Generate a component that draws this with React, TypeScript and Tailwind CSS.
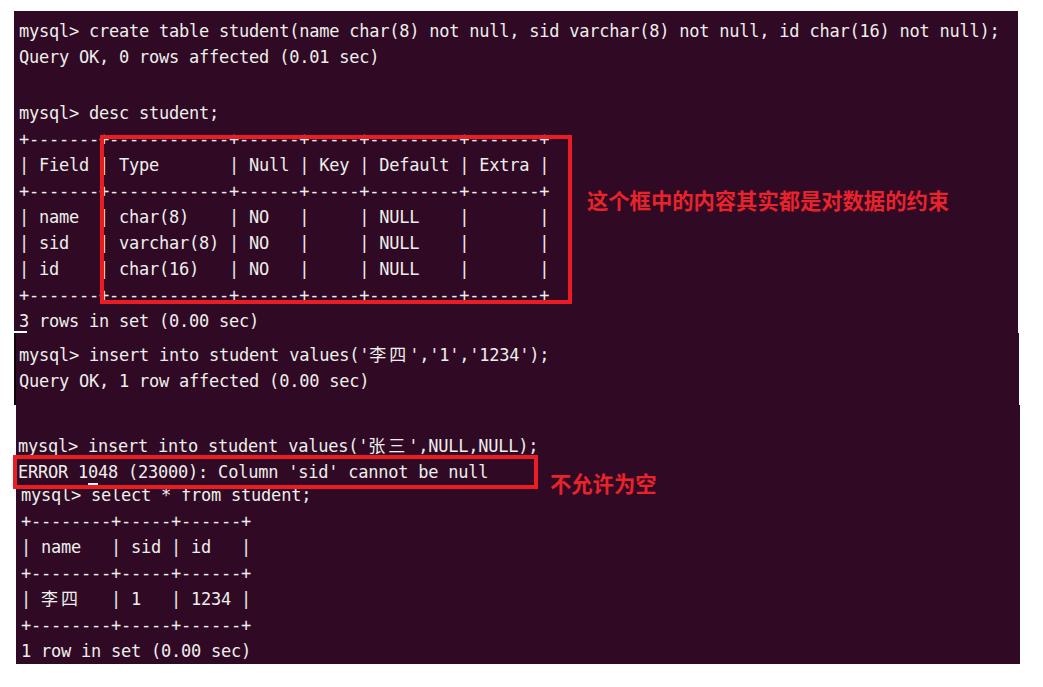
const descLines = [
  "+-------+------------+------+-----+---------+-------+",
  "| Field | Type       | Null | Key | Default | Extra |",
  "+-------+------------+------+-----+---------+-------+",
  "| name  | char(8)    | NO   |     | NULL    |       |",
  "| sid   | varchar(8) | NO   |     | NULL    |       |",
  "| id    | char(16)   | NO   |     | NULL    |       |",
  "+-------+------------+------+-----+---------+-------+",
  "3 rows in set (0.00 sec)",
];

const selectLines = [
  "+--------+-----+------+",
  "| name   | sid | id   |",
  "+--------+-----+------+",
  "| 李四   | 1   | 1234 |",
  "+--------+-----+------+",
  "1 row in set (0.00 sec)",
];

// CJK glyphs take two terminal cells (20px)
function Txt({ s }: { s: string }) {
  const parts = s.split(/([\u4e00-\u9fff]+)/);
  return (
    <>
      {parts.map((p, i) =>
        i % 2 ? (
          <span key={i} className="tracking-[3px]">
            {p}
          </span>
        ) : (
          p
        )
      )}
    </>
  );
}

function Line({ s, className = "h-[26px]" }: { s: string; className?: string }) {
  return (
    <div className={`${className} leading-[26px] whitespace-pre`}>
      <Txt s={s} />
    </div>
  );
}

export default function App() {
  return (
    <div className="w-[1043px] h-[687px] bg-white pt-[11px] overflow-hidden font-['DejaVu_Sans_Mono','Noto_Sans_CJK_SC',monospace] text-[17px] tracking-[-0.23px] text-[#eeeeec]">
      {/* panel 1: create + desc */}
      <div className="relative ml-[14px] w-[1004px] h-[322px] bg-[#300a24] pl-[5px] pt-[7px]">
        <Line s="mysql> create table student(name char(8) not null, sid varchar(8) not null, id char(16) not null);" />
        <Line s="Query OK, 0 rows affected (0.01 sec)" />
        <div className="h-[30px]" />
        <Line s="mysql> desc student;" />
        {descLines.map((l, i) => (
          <Line key={i} s={l} />
        ))}
        <div className="absolute left-0 bottom-0 w-[13px] h-[2px] bg-white" />
        <div className="absolute left-[86px] top-[124px] w-[472px] h-[169px] border-[4px] border-[#ec1c24]" />
        <div className="absolute left-[573px] top-[178px] leading-none tracking-normal font-['Noto_Sans_CJK_SC',sans-serif] font-bold text-[21.3px] text-[#e8232b]">
          这个框中的内容其实都是对数据的约束
        </div>
      </div>

      {/* panel 2: insert 李四 */}
      <div className="ml-[14px] w-[1005px] h-[72px] bg-[#300a24] border-l-[2px] border-[#0d0309] pl-[3px] pt-[9px]">
        <Line s="mysql> insert into student values('李四','1','1234');" />
        <Line s="Query OK, 1 row affected (0.00 sec)" />
      </div>

      {/* panel 3: insert 张三 + select */}
      <div className="relative ml-[16px] w-[1004px] h-[259px] bg-[#300a24] pt-[28px]">
        <div className="pl-[2px]">
          <Line s="mysql> insert into student values('张三',NULL,NULL);" />
          <div className="h-[23px] leading-[26px] whitespace-pre">
            ERROR 1<span className="relative">0<span className="absolute left-0 bottom-[-3px] h-[2px] w-full bg-white" /></span>48 (23000): Column 'sid' cannot be null
          </div>
        </div>
        <div className="pl-[5px]">
          <Line s="mysql> select * from student;" />
          {selectLines.map((l, i) => (
            <Line key={i} s={l} />
          ))}
        </div>
        <div className="absolute left-[-3px] top-[50px] w-[525px] h-[34px] border-[4px] border-[#ec1c24]" />
        <div className="absolute left-[534px] top-[67px] leading-none tracking-normal font-['Noto_Sans_CJK_SC',sans-serif] font-bold text-[21.3px] text-[#e8232b]">
          不允许为空
        </div>
      </div>
    </div>
  );
}
